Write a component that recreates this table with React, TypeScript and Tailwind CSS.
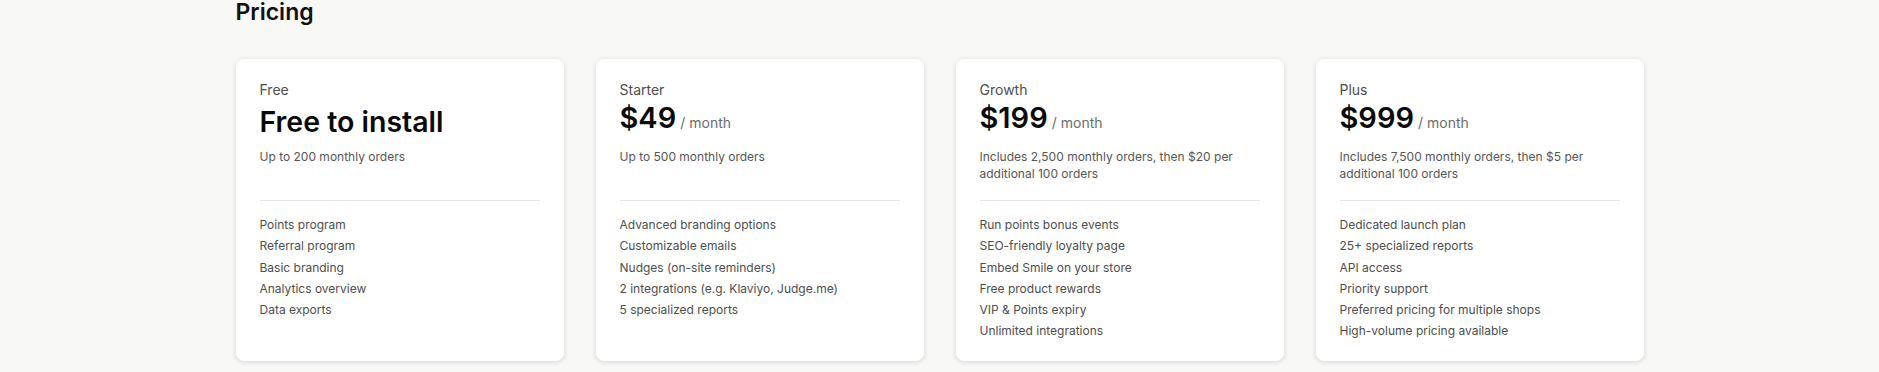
import React from "react";

type Plan = {
  name: string;
  price: string;
  perMonth: boolean;
  desc: string;
  features: string[];
};

const plans: Plan[] = [
  {
    name: "Free",
    price: "Free to install",
    perMonth: false,
    desc: "Up to 200 monthly orders",
    features: ["Points program", "Referral program", "Basic branding", "Analytics overview", "Data exports"],
  },
  {
    name: "Starter",
    price: "$49",
    perMonth: true,
    desc: "Up to 500 monthly orders",
    features: [
      "Advanced branding options",
      "Customizable emails",
      "Nudges (on-site reminders)",
      "2 integrations (e.g. Klaviyo, Judge.me)",
      "5 specialized reports",
    ],
  },
  {
    name: "Growth",
    price: "$199",
    perMonth: true,
    desc: "Includes 2,500 monthly orders, then $20 per additional 100 orders",
    features: [
      "Run points bonus events",
      "SEO-friendly loyalty page",
      "Embed Smile on your store",
      "Free product rewards",
      "VIP & Points expiry",
      "Unlimited integrations",
    ],
  },
  {
    name: "Plus",
    price: "$999",
    perMonth: true,
    desc: "Includes 7,500 monthly orders, then $5 per additional 100 orders",
    features: [
      "Dedicated launch plan",
      "25+ specialized reports",
      "API access",
      "Priority support",
      "Preferred pricing for multiple shops",
      "High-volume pricing available",
    ],
  },
];

function Card({ plan }: { plan: Plan }) {
  return (
    <div className="bg-white rounded-lg shadow-[0_1px_5px_rgba(0,0,0,0.16)] px-6 pt-[21px] pb-[19px] flex flex-col">
      <div className="text-[14px] leading-5 text-[#4d4d4d]">{plan.name}</div>
      {plan.perMonth ? (
        <div className="h-[44px] flex items-baseline">
          <span className="text-[29px] leading-[35px] font-semibold text-[#0a0a0a]">{plan.price}</span>
          <span className="ml-1 text-[14px] text-[#6b6b6b]">/ month</span>
        </div>
      ) : (
        <div className="h-[44px] text-[28.5px] leading-[44px] font-semibold text-[#0a0a0a]">{plan.price}</div>
      )}
      <div className="mt-[5px] min-h-[33px] text-[12px] leading-[16.5px] text-[#555555]">{plan.desc}</div>
      <div className="mt-[18px] h-px bg-[#e6e6e6]" />
      <ul className="mt-[13px] text-[12px] leading-[21.25px] text-[#4d4d4d]">
        {plan.features.map((f) => (
          <li key={f}>{f}</li>
        ))}
      </ul>
    </div>
  );
}

export default function App() {
  return (
    <div className="min-h-[372px] bg-[#f8f8f7]" style={{ fontFamily: "Inter, 'Noto Sans', sans-serif" }}>
      <div className="mx-auto w-[1408px]">
        <h2 className="text-[23px] leading-6 font-semibold text-[#111111]">Pricing</h2>
        <div className="mt-[35px] grid grid-cols-4 gap-8">
          {plans.map((p) => (
            <Card key={p.name} plan={p} />
          ))}
        </div>
      </div>
    </div>
  );
}
